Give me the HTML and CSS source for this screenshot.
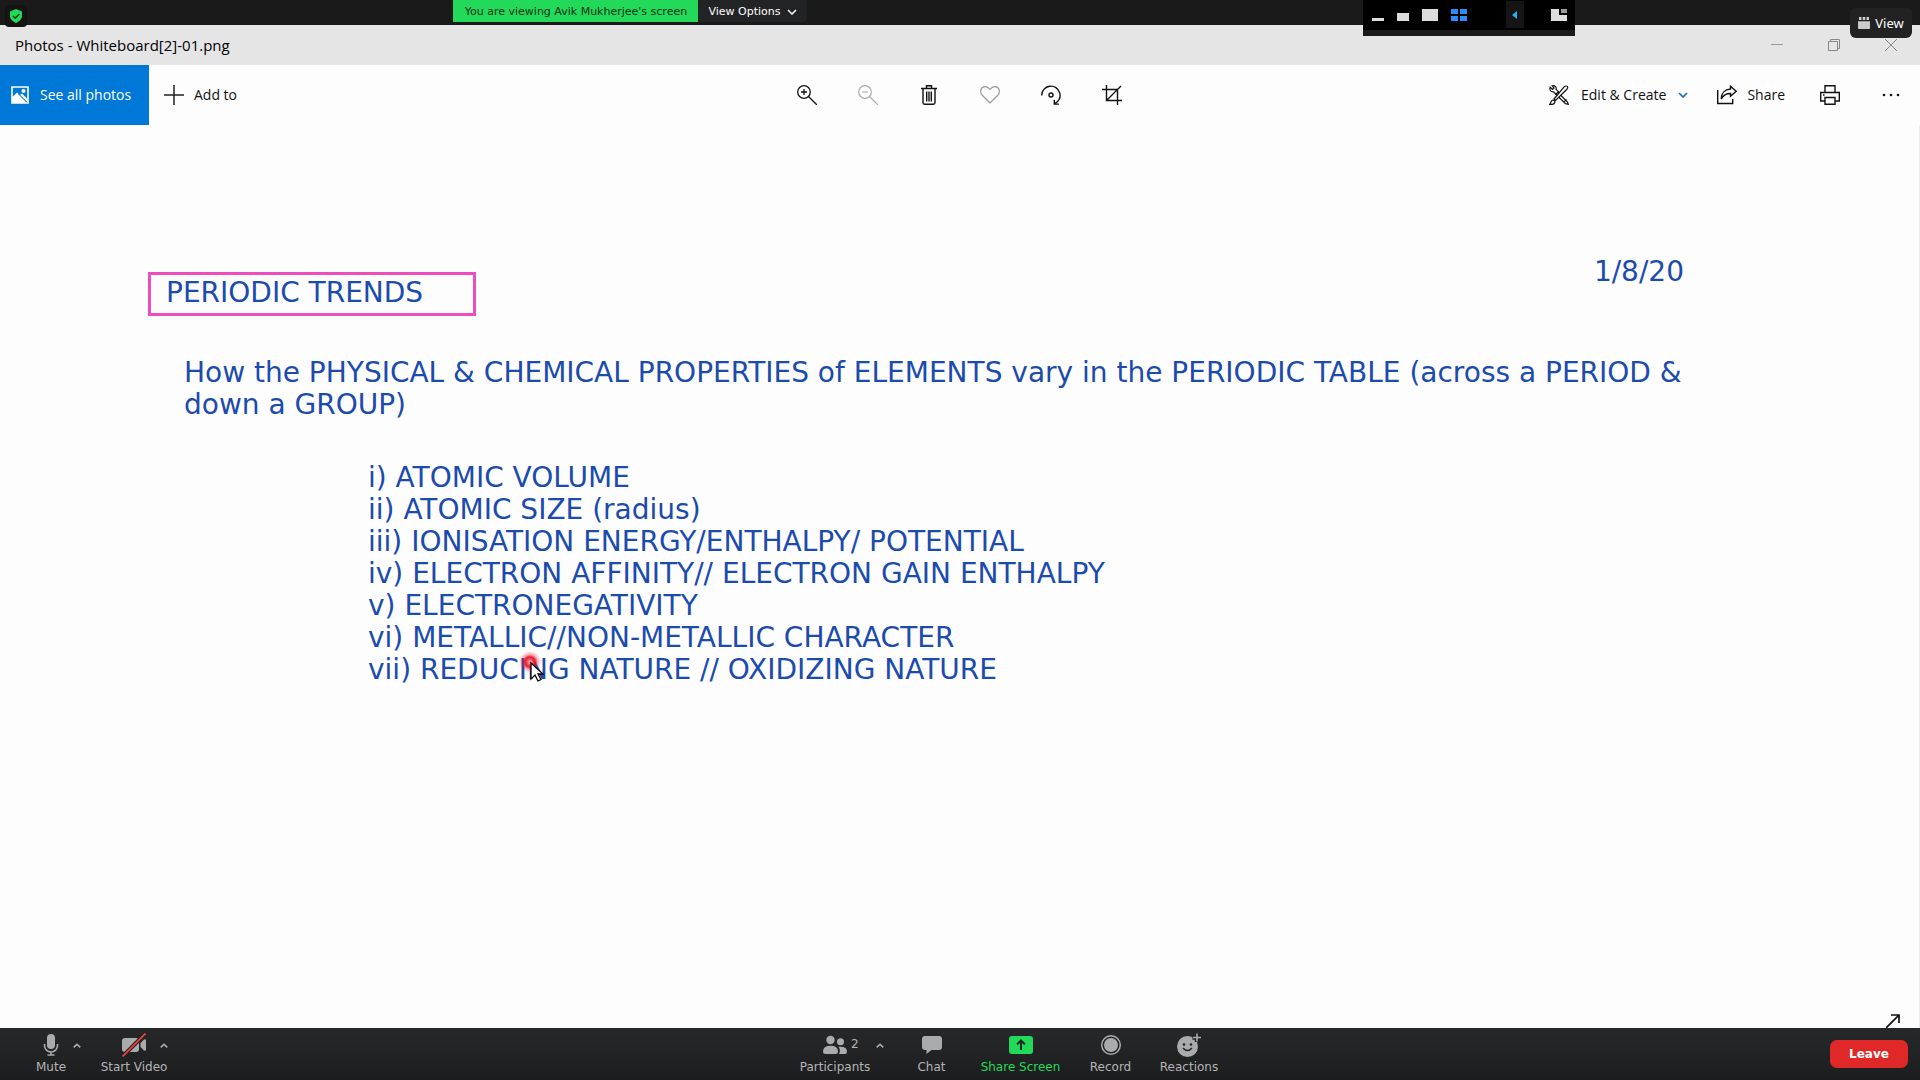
FILE: index.html
```html
<!DOCTYPE html>
<html lang="en">
<head>
<meta charset="utf-8">
<meta name="viewport" content="width=device-width, initial-scale=1">
<title>Shared screen</title>
<link rel="stylesheet" href="styles.css">
</head>
<body>
<div class="meeting">
  <header class="share-bar">
    <button class="shield" aria-label="Meeting security">
      <svg width="22" height="20" viewBox="0 0 22 20"><path d="M11 3 17 5.500V10c0 3.500-3 5.500-6 7-3-1.500-6-3.500-6-7V5.500z" fill="#23d959"/><path d="m8 10 2.200 2.200L14.300 8" fill="none" stroke="#143d20" stroke-width="1.500"/></svg>
    </button>
    <div class="share-status">
      <span class="viewing">You are viewing Avik Mukherjee's screen</span>
      <button class="view-options">View Options
        <svg width="10" height="6" viewBox="0 0 10 6"><path d="m1 1 4 4 4-4" fill="none" stroke="#fff" stroke-width="1.500"/></svg>
      </button>
    </div>
    <div class="layout-panel">
      <svg width="212" height="36" viewBox="0 0 212 36">
        <path fill="#000" d="M0 0h212v30H0z"/>
        <path fill="#ddd" d="M9 18h12v3H9zM34 13h12v8H34zM59 9h16v12H59z"/>
        <path fill="#2d8cff" d="M88 9h7v5h-7zM97 9h7v5h-7zM88 16h7v5h-7zM97 16h7v5h-7z"/>
        <path fill="#151515" d="M143 1h18v27h-18z"/>
        <path fill="#22b0f5" d="M154 11v8l-5-4z"/>
        <path fill="#ddd" d="M188 9h8v6h8v6h-16z"/><path fill="#999" d="M198 9h6v4h-6z"/>
      </svg>
    </div>
    <button class="view-button">
      <svg width="12" height="12" viewBox="0 0 12 12"><path fill="#ccc" d="M1 0h2.500v3H1zM4.700 0h2.600v3H4.700zM8.500 0H11v3H8.500zM0 4.300h12V11q0 1-1 1H1q-1 0-1-1z"/></svg>
      View
    </button>
  </header>

  <div class="title-bar">
    <h1 class="file-name">Photos - Whiteboard[2]-01.png</h1>
    <div class="window-buttons">
      <button aria-label="Minimize"><svg width="12" height="12" viewBox="0 0 12 12"><path d="M0 5.500h12" stroke="#999"/></svg></button>
      <button aria-label="Restore"><svg width="12" height="12" viewBox="0 0 12 12"><path d="M.5 2.500h9v9h-9zM2.500 2.500v-2h9v9h-2" fill="none" stroke="#888"/></svg></button>
      <button aria-label="Close"><svg width="12" height="12" viewBox="0 0 12 12"><path d="m0 0 12 12M12 0 0 12" stroke="#888"/></svg></button>
    </div>
  </div>

  <nav class="photo-tools">
    <div class="tools-left">
      <button class="see-all">
        <svg width="18" height="18" viewBox="0 0 18 18"><path d="M1 1h16v16H1z" fill="none" stroke="#fff" stroke-width="1.600"/><path d="M1 11.500 6 6.500 16.500 17H1z" fill="#fff"/><path d="m9 9 2-1.500 6 6V17z" fill="#fff"/><path d="m7.500 8 8.500 8.500" stroke="#0078d7"/><circle cx="12.500" cy="5" r="2" fill="#fff"/></svg>
        See all photos
      </button>
      <button class="tool add-to">
        <svg width="20" height="20" viewBox="0 0 20 20"><path d="M10 0v20M0 10h20" stroke="#222" stroke-width="1.500"/></svg>
        Add to
      </button>
    </div>
    <div class="tools-centre">
      <button aria-label="Zoom in"><svg width="20" height="20" viewBox="0 0 20 20" fill="none" stroke="#111" stroke-width="1.300"><circle cx="7" cy="7" r="6.300"/><path d="M11.500 11.500 20 20M4 7h6M7 4v6"/></svg></button>
      <button aria-label="Zoom out" disabled><svg width="20" height="20" viewBox="0 0 20 20" fill="none" stroke="#aaa" stroke-width="1.200"><circle cx="7" cy="7" r="6.300"/><path d="M11.500 11.500 20 20M4 7h6"/></svg></button>
      <button aria-label="Delete"><svg width="20" height="20" viewBox="0 0 20 20" fill="none" stroke="#111" stroke-width="1.400"><path d="M2 3.500h16M7.500 3V.800h5V3M4 4v13.500q0 1.700 1.700 1.700h8.600q1.700 0 1.700-1.700V4M7.700 6.500v10M10 6.500v10M12.300 6.500v10"/></svg></button>
      <button aria-label="Favorite"><svg width="20" height="20" viewBox="0 0 20 20" fill="none" stroke="#999" stroke-width="1.200"><path d="M10 18 2 10C-.5 7 .5 1.800 5 1.600 7.500 1.500 9 3 10 4.500 11 3 12.500 1.500 15 1.600c4.500.2 5.500 5.400 3 8.400z"/></svg></button>
      <button aria-label="Rotate"><svg width="20" height="20" viewBox="0 0 20 20" fill="none" stroke="#111" stroke-width="1.400"><path d="M.7 10.500A9.200 9.200 0 1 1 13.500 18.800M13.300 14.700v4.400h4.700"/><circle cx="10" cy="10" r="2"/></svg></button>
      <button aria-label="Crop"><svg width="20" height="20" viewBox="0 0 20 20" fill="none" stroke="#111" stroke-width="1.400"><path d="M0 4.500h15.500V20M4.500 0v15.500H20M4.500 15.500 19 1"/></svg></button>
    </div>
    <div class="tools-right">
      <button class="tool edit">
        <svg width="20" height="20" viewBox="0 0 20 20" fill="none" stroke="#111" stroke-width="1.200"><path d="m8.500 7 10 10 .8 2.300-2.800-.6L6.500 9M14.500 17.300l3-3M.8 19.300c1.200-.8.800-3.800 3-4.300 3 .3 2.700 4-.5 4.300z"/><path fill="#fff" d="m5 14 9.700-11.700q2.300-2 3.500-.9 1.300 1.200-.8 3.400L6.500 15.500z"/><path d="M1.200 2.200 3.500 4.500 5 3 3.200.8q2-.6 3.300.8 1 1.200.6 2.700l2.400 2.400-2.500 2.500-2.400-2.400q-1.800.3-3-.9-1.100-1.600-.4-3.700z"/></svg>
        Edit &amp; Create
        <svg width="10" height="6" viewBox="0 0 10 6"><path d="m1 1 4 4 4-4" fill="none" stroke="#0f6cbd" stroke-width="1.600"/></svg>
      </button>
      <button class="tool share">
        <svg width="20" height="20" viewBox="0 0 20 20" fill="none" stroke="#111" stroke-width="1.400"><path d="M.7 5v13.500h15V14M13.500 1.200l5.700 5-5.700 5V8.500C9 8.500 6 10.500 4.200 14 4.200 8 8 4.300 13.500 4z"/></svg>
        Share
      </button>
      <button class="print" aria-label="Print"><svg width="20" height="20" viewBox="0 0 20 20" fill="none" stroke="#111" stroke-width="1.400"><path d="M5 7.500V.700h10v6.800M5 16H.700V7.500h18.600V16H15M5 12.500h10v6.800H5zM3 10h1.500"/></svg></button>
      <button class="more" aria-label="More"><svg width="18" height="4" viewBox="0 0 18 4" fill="#111"><circle cx="2" cy="2" r="1.300"/><circle cx="9" cy="2" r="1.300"/><circle cx="16" cy="2" r="1.300"/></svg></button>
    </div>
  </nav>

  <main class="board">
    <div class="board-head">
      <h2 class="topic">PERIODIC TRENDS</h2>
      <time class="date" datetime="2020-08-01">1/8/20</time>
    </div>
    <p class="intro">How the PHYSICAL &amp; CHEMICAL PROPERTIES of ELEMENTS vary in the PERIODIC TABLE (across a PERIOD &amp;<br>down a GROUP)</p>
    <ul class="trends">
      <li>i) ATOMIC VOLUME</li>
      <li>ii) ATOMIC SIZE (radius)</li>
      <li>iii) IONISATION ENERGY/ENTHALPY/ POTENTIAL</li>
      <li>iv) ELECTRON AFFINITY// ELECTRON GAIN ENTHALPY</li>
      <li>v) ELECTRONEGATIVITY</li>
      <li>vi) METALLIC//NON-METALLIC CHARACTER</li>
      <li>vii) REDUCING NATURE // OXIDIZING NATURE</li>
    </ul>
    <svg class="pointer" width="32" height="40" viewBox="0 0 32 40">
      <defs><radialGradient id="laser"><stop offset="0" stop-color="#ffb0b0"/><stop offset=".2" stop-color="#f46a74"/><stop offset=".45" stop-color="#e80f25" stop-opacity=".95"/><stop offset=".7" stop-color="#f02035" stop-opacity=".35"/><stop offset="1" stop-color="#f02035" stop-opacity="0"/></radialGradient></defs>
      <circle cx="12" cy="13" r="11" fill="url(#laser)"/>
      <path d="M13 14v16l4-4 3 6 3-1.500-3-5.500h5z" fill="#fff" stroke="#000" stroke-width="1.300"/>
    </svg>
    <button class="expand" aria-label="Full screen"><svg width="14" height="14" viewBox="0 0 14 14" fill="none" stroke="#111" stroke-width="1.700"><path d="M0 14 13 1M5 1h8v8"/></svg></button>
  </main>

  <footer class="controls">
    <div class="controls-left">
      <div class="control">
        <button class="control-button mute">
          <svg width="24" height="24" viewBox="0 0 24 24"><rect x="8" y="1" width="8" height="15" rx="4" fill="#aaabad"/><path d="M5.500 11v1.500a6.500 6.500 0 0 0 13 0V11M12 19v3M8.500 22h7" fill="none" stroke="#aaabad" stroke-width="1.600"/></svg>
          <span>Mute</span>
        </button>
        <button class="caret" aria-label="Audio settings"><svg width="8" height="5" viewBox="0 0 8 5"><path d="m.7 4.300 3.300-3 3.300 3" fill="none" stroke="#aaabad" stroke-width="1.600"/></svg></button>
      </div>
      <div class="control">
        <button class="control-button video">
          <svg width="24" height="24" viewBox="0 0 24 24"><rect y="5" width="17" height="14" rx="3" fill="#aaabad"/><path d="M18.500 10 22 6.500q2-1 2 1v9q0 2-2 1L18.500 14z" fill="#aaabad"/><path d="M.5 23.500 23.500.500" stroke="#222325" stroke-width="4"/><path d="M.5 23.500 23.500.500" stroke="#e8443f" stroke-width="1.800"/></svg>
          <span>Start Video</span>
        </button>
        <button class="caret" aria-label="Video settings"><svg width="8" height="5" viewBox="0 0 8 5"><path d="m.7 4.300 3.300-3 3.300 3" fill="none" stroke="#aaabad" stroke-width="1.600"/></svg></button>
      </div>
    </div>
    <div class="controls-centre">
      <button class="control-button participants">
        <svg width="24" height="24" viewBox="0 0 24 24" fill="#aaabad"><circle cx="7.500" cy="7" r="4.200"/><circle cx="17.500" cy="8.800" r="3.500"/><path d="M0 18.500Q0 12.800 7.500 12.800T15 18.500Q15 21 12.500 21h-10Q0 21 0 18.500zM15.500 13.800q8.500-.8 8.500 4.700 0 2.500-2 2.500h-6q2-3.500-.5-7.200z"/></svg>
        <span>Participants</span>
        <span class="count">2</span>
        <svg class="count-caret" width="8" height="5" viewBox="0 0 8 5"><path d="m.7 4.300 3.300-3 3.300 3" fill="none" stroke="#aaabad" stroke-width="1.600"/></svg>
      </button>
      <button class="control-button chat">
        <svg width="24" height="24" viewBox="0 0 24 24"><path fill="#aaabad" d="M5 3h14q3 0 3 3v8q0 3-3 3h-7.500L6.500 21v-4H5q-3 0-3-3V6q0-3 3-3z"/></svg>
        <span>Chat</span>
      </button>
      <button class="control-button share-screen">
        <svg width="24" height="24" viewBox="0 0 24 24"><rect y="3" width="24" height="18" rx="3" fill="#23d959"/><path d="M12 17V8M8 11.500l4-4 4 4" fill="none" stroke="#1c2b20" stroke-width="2"/></svg>
        <span>Share Screen</span>
      </button>
      <button class="control-button record">
        <svg width="24" height="24" viewBox="0 0 24 24"><circle cx="12" cy="12" r="9.300" fill="none" stroke="#aaabad" stroke-width="1.500"/><circle cx="12" cy="12" r="7" fill="#aaabad"/></svg>
        <span>Record</span>
      </button>
      <button class="control-button reactions">
        <svg width="24" height="24" viewBox="0 0 24 24"><circle cx="10.500" cy="13.500" r="10.500" fill="#aaabad"/><path d="M20 0v9M15.500 4.500H24" stroke="#222325" stroke-width="4.500"/><path d="M20 .5v8M16 4.500h8" stroke="#aaabad" stroke-width="1.600"/><circle cx="7" cy="11.500" r="1.300" fill="#222325"/><circle cx="14" cy="11.500" r="1.300" fill="#222325"/><path d="M6 15q4.500 5 9 0" fill="none" stroke="#222325" stroke-width="1.600"/></svg>
        <span>Reactions</span>
      </button>
    </div>
    <button class="leave">Leave</button>
  </footer>
</div>
</body>
</html>
```
FILE: styles.css
```css
* { box-sizing: border-box; }

body { margin: 0; background: #fdfdfd; }

button {
  margin: 0;
  padding: 0;
  border: 0;
  background: none;
  color: inherit;
  font: inherit;
  white-space: nowrap;
}

svg { display: block; flex: none; }

.meeting {
  display: flex;
  flex-direction: column;
  min-height: 100vh;
}

/* Meeting status bar */
.share-bar {
  position: relative;
  height: 25px;
  background: #1a1a1a;
  color: #fff;
  font: 11px/20px "DejaVu Sans", sans-serif;
}

.shield {
  position: absolute;
  left: 5px;
  top: 5px;
  height: 22px;
  border-radius: 4px;
  background: #141414;
}

.share-status {
  display: flex;
  justify-content: center;
  padding-right: 660px;
}

.viewing {
  width: 245px;
  padding-top: 2px;
  text-align: center;
  background: #23d959;
  color: #10331b;
}

.view-options {
  display: flex;
  align-items: center;
  gap: 6px;
  padding: 2px 10px 0;
  background: #222325;
  border-radius: 0 0 4px 0;
}

.layout-panel {
  position: absolute;
  right: 345px;
  top: 0;
  background: #1a1a1a;
}

.view-button {
  position: absolute;
  right: 8px;
  top: 8px;
  z-index: 1;
  display: flex;
  align-items: center;
  justify-content: center;
  gap: 5px;
  width: 62px;
  height: 30px;
  border-radius: 6px;
  background: #222;
  font: 13px/20px "Noto Sans", sans-serif;
}

/* Photo viewer */
.title-bar {
  display: flex;
  align-items: center;
  justify-content: space-between;
  height: 40px;
  padding: 0 1px 0 15px;
  background: #e5e5e6;
  color: #000;
}

.file-name {
  margin: 0;
  font: 15px/20px "Open Sans", sans-serif;
}

.window-buttons { display: flex; }

.window-buttons button {
  display: flex;
  justify-content: center;
  width: 57px;
}

.photo-tools {
  display: grid;
  grid-template-columns: 1fr auto 1fr;
  height: 60px;
  color: #111;
  font: 14px/20px "Open Sans", sans-serif;
}

.tools-left,
.tools-centre,
.tools-right,
.tool,
.see-all {
  display: flex;
  align-items: center;
}

.see-all {
  gap: 11px;
  width: 149px;
  height: 60px;
  padding-left: 11px;
  background: #0078d7;
  color: #fff;
}

.tool { gap: 10px; }
.add-to { padding-left: 15px; }
.edit { gap: 12px; }

.tools-centre { padding-right: 2px; }

.tools-centre button {
  display: flex;
  justify-content: center;
  width: 61px;
}

.tools-right {
  justify-content: flex-end;
  padding-right: 20px;
}

.share { margin-left: 29px; }
.print { margin-left: 35px; }
.more { margin-left: 42px; }

/* Whiteboard image */
.board {
  position: relative;
  flex: 1;
  padding: 131px 148px 0;
  border-right: 1px solid #ececec;
  color: #1b4bad;
  font: 28px/32px "DejaVu Sans", sans-serif;
}

.board-head {
  display: flex;
  justify-content: space-between;
  padding-right: 87px;
}

.topic {
  width: 328px;
  height: 44px;
  margin: 16px 0 0;
  padding: 2px 15px;
  border: 3px solid #ee4dbd;
  font: inherit;
}

.intro { margin: 41px 0 0 36px; }

.trends {
  margin: 41px 0 0 220px;
  padding: 0;
  list-style: none;
}

.pointer {
  position: absolute;
  left: 518px;
  top: 524px;
}

.expand {
  position: absolute;
  right: 19px;
  bottom: 0;
}

/* Meeting controls */
.controls {
  display: grid;
  grid-template-columns: 1fr auto 1fr;
  align-items: center;
  height: 52px;
  padding: 0 12px 0 21px;
  background: linear-gradient(#27282a, #1c1d1f);
  color: #b4b4b6;
  font: 12px/14px "DejaVu Sans", sans-serif;
}

.controls-left,
.controls-centre { display: flex; }

.controls-left { gap: 19px; }

.control { display: flex; }

.control-button {
  position: relative;
  display: flex;
  flex-direction: column;
  align-items: center;
  gap: 3px;
  margin-bottom: 2px;
}

.mute { width: 60px; }
.video { width: 68px; }

.caret {
  align-self: flex-start;
  width: 8px;
  margin: 10px 0 0 -8px;
}

.controls-centre { padding-left: 76px; }

.participants { width: 111px; }
.chat { width: 82px; }
.share-screen { width: 96px; color: #23d959; }
.record { width: 84px; }
.reactions { width: 73px; }

.count {
  position: absolute;
  left: calc(50% + 16px);
  top: 4px;
}

.count-caret {
  position: absolute;
  left: calc(50% + 41px);
  top: 10px;
}

.leave {
  justify-self: end;
  width: 78px;
  height: 28px;
  border-radius: 7px;
  background: #e02828;
  color: #fff;
  font-weight: bold;
}
```
